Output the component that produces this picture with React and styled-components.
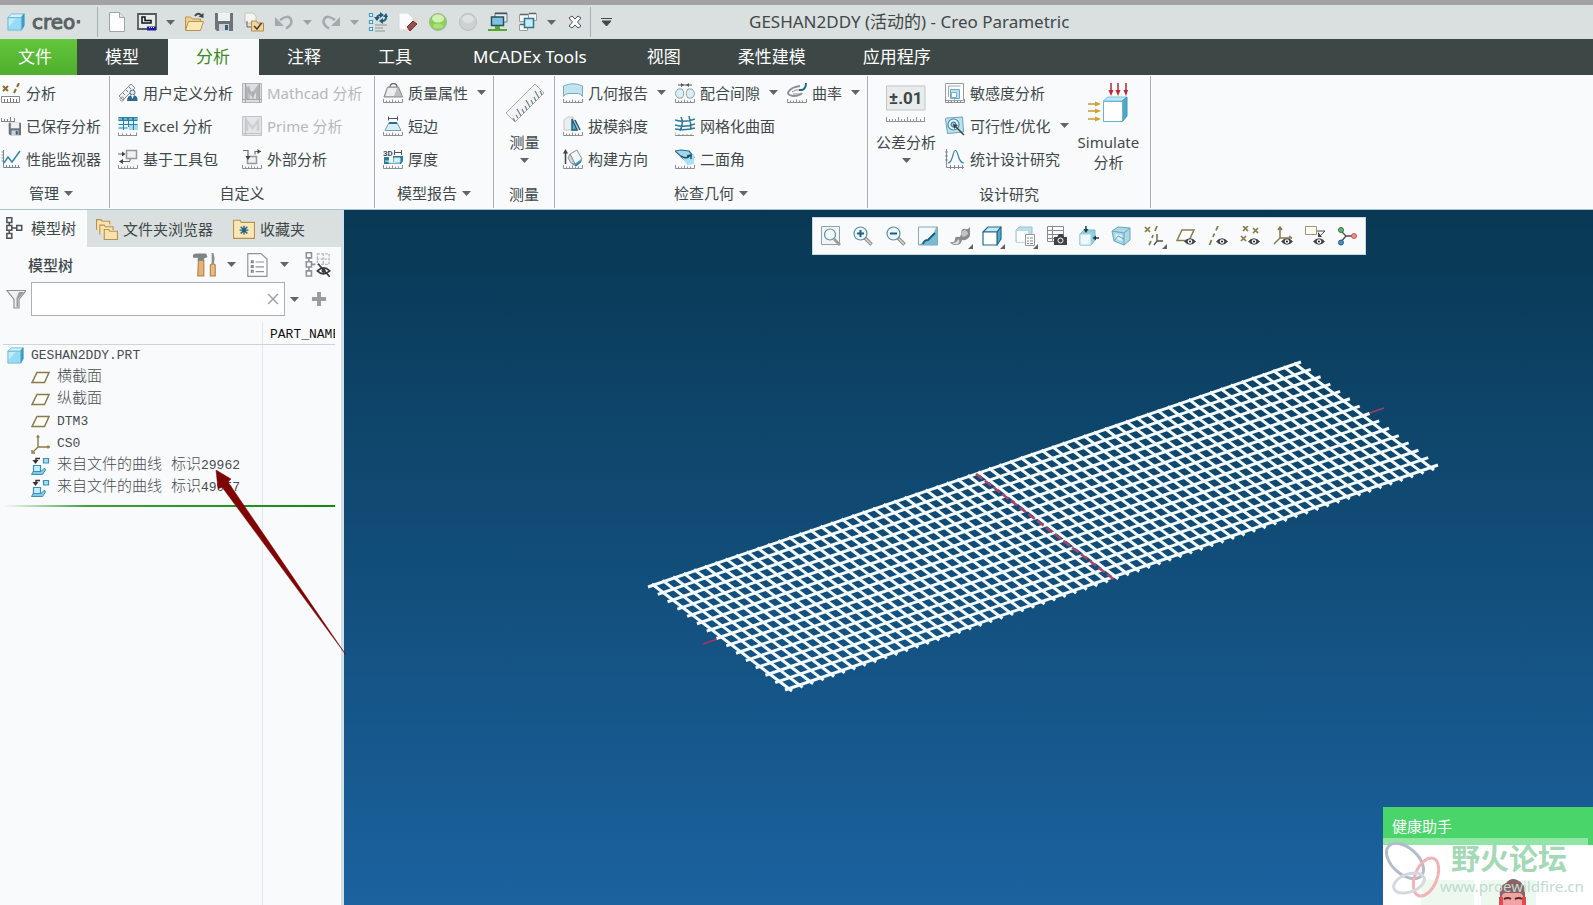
import React from "react";
import styled, { createGlobalStyle } from "styled-components";

const GlobalStyle = createGlobalStyle`
    * {
        box-sizing: border-box;
    }
    body {
        margin: 0;
        font-family: "Noto Sans", "Noto Sans CJK SC", sans-serif;
        font-size: 15px;
        line-height: 20px;
        color: #40484a;
    }
    button {
        padding: 0;
        border: 0;
        background: none;
        font: inherit;
        color: inherit;
        white-space: nowrap;
        cursor: pointer;
    }
    svg {
        display: block;
        flex: none;
    }
`;

const Page = styled.div`
    display: flex;
    flex-direction: column;
    min-height: 100vh;
    border-top: 5px solid #a2a1a3;
    background: #f8fafb;
    overflow: hidden;
`;

/* title bar */

const TitleBar = styled.header`
    display: flex;
    align-items: center;
    height: 34px;
    padding-left: 7px;
    background: #dae0df;
`;

const Brand = styled.div`
    display: flex;
    align-items: center;
    gap: 7px;
    width: 91px;
    height: 30px;
    border-right: 1px solid #a9b0b1;
    font-family: "DejaVu Sans", sans-serif;
    font-size: 20px;
    -webkit-text-stroke: 1px #586265;
    color: #586265;
`;

const QuickAccess = styled.nav`
    display: flex;
    align-items: center;
    height: 30px;
    padding-left: 4px;
    border-right: 1px solid #a9b0b1;
`;

const QuickButton = styled.button`
    display: flex;
    align-items: center;
    justify-content: center;
    width: ${(p) => (p.$caret ? "17px" : "30px")};
    height: 28px;
    opacity: ${(p) => (p.disabled ? 0.5 : 1)};
`;

const WindowTitle = styled.h1`
    margin: 0 0 0 128px;
    font-size: 17px;
    font-weight: 400;
    line-height: 24px;
`;

/* ribbon */

const TabBar = styled.nav`
    display: flex;
    height: 36px;
    background: #3d4746;
`;

const Tab = styled.button`
    && {
        padding: ${(p) => (p.$wide ? "0 32px" : "0 29px 0 28px")};
        font-size: 17px;
        line-height: 24px;
        color: ${(p) => (p.$active ? "#3b8a1e" : "#ffffff")};
        background: ${(p) => (p.$active ? "#f8fafb" : "transparent")};
    }
`;

const FileTab = styled(Tab)`
    && {
        padding: 0 25px 0 18px;
        background: linear-gradient(#63c63c, #4fae2e);
    }
`;

const Ribbon = styled.section`
    display: flex;
    height: 135px;
    padding: 1px 0;
    border-bottom: 1px solid #a5c3d0;
    background: #f8fafb;
`;

const Group = styled.div`
    display: flex;
    flex-direction: column;
    min-width: ${(p) => p.$width}px;
    padding-left: ${(p) => (p.$flush ? "1px" : "8px")};
    border-right: 1px solid #a9aeb0;
`;

const GroupBody = styled.div`
    display: flex;
    gap: 9px;
    height: 103px;
`;

const GroupLabel = styled.div`
    display: flex;
    align-items: center;
    justify-content: center;
    gap: 5px;
    height: 30px;
    padding-right: 8px;
`;

const Column = styled.div`
    display: flex;
    flex-direction: column;
`;

const Command = styled.button`
    display: flex;
    align-items: center;
    gap: 5px;
    height: 33px;
    && {
        color: ${(p) => (p.disabled ? "#b4b9bb" : "#40484a")};
    }
`;

const CommandText = styled.span`
    margin-right: ${(p) => (p.$caret ? "4px" : "0")};
`;

const BigCommand = styled.button`
    display: flex;
    flex-direction: column;
    align-items: center;
    gap: 6px;
    min-width: 45px;
    height: 103px;
    && {
        padding-top: 7px;
    }
`;

const BigText = styled.span`
    padding-top: 3px;
    white-space: pre-line;
`;

/* model tree */

const Workspace = styled.main`
    display: flex;
    flex: 1;
`;

const Sidebar = styled.aside`
    position: relative;
    display: flex;
    flex-direction: column;
    flex: none;
    width: 344px;
    border-right: 3px solid #d3dfe6;
    background: #f8fafb;
`;

const PanelTabs = styled.div`
    display: flex;
    height: 37px;
    background: #dae0df;
`;

const PanelTab = styled.button`
    display: flex;
    align-items: center;
    gap: ${(p) => (p.$active ? "6px" : "5px")};
    && {
        padding: 0 ${(p) => (p.$active ? "11px 2px 3px" : "11px 0 9px")};
        background: ${(p) => (p.$active ? "#f8fafb" : "transparent")};
    }
`;

const PanelHead = styled.div`
    display: flex;
    align-items: center;
    height: 35px;
    padding: 0 10px 0 28px;
`;

const PanelTitle = styled.h2`
    flex: 1;
    margin: 0;
    font-size: 15px;
    font-weight: 500;
`;

const PanelTools = styled.div`
    display: flex;
    align-items: center;
    gap: 10px;
`;

const HideButton = styled.button`
    margin-left: 6px;
`;

const SearchRow = styled.div`
    display: flex;
    align-items: center;
    gap: 5px;
    padding: 0 8px 0 6px;
`;

const SearchBox = styled.div`
    display: flex;
    align-items: center;
    flex: 1;
    height: 34px;
    padding-right: 4px;
    border: 1px solid #a9b0b3;
    background: #ffffff;
`;

const SearchInput = styled.input`
    flex: 1;
    min-width: 0;
    height: 30px;
    padding: 0 6px;
    border: 0;
    outline: 0;
    background: transparent;
    font: inherit;
`;

const TreeArea = styled.div`
    flex: 1;
    width: 332px;
    margin: 6px 0 0 3px;
    overflow: hidden;
    background: linear-gradient(#e1e6e9, #e1e6e9) 259px 0 / 1px 100% no-repeat;
`;

const TreeTable = styled.table`
    width: 332px;
    table-layout: fixed;
    border-collapse: collapse;
    font-family: "Liberation Mono", "Noto Sans CJK SC", monospace;
    font-size: 15px;
    font-weight: 300;
    color: #464c4f;
`;

const HeadCell = styled.th`
    width: ${(p) => p.$width};
    height: 22px;
    padding: 4px 0 0 7px;
    border-bottom: 1px solid #cfd4d6;
    font-size: 13px;
    font-weight: 400;
    line-height: 16px;
    text-align: left;
    white-space: nowrap;
    color: #111111;
`;

const TreeCell = styled.td`
    height: 22px;
    padding: 0;
`;

const TreeItem = styled.div`
    display: flex;
    align-items: center;
    gap: ${(p) => (p.$root ? "7px" : "6px")};
    height: 22px;
    padding-left: ${(p) => (p.$root ? "4px" : "28px")};
    white-space: pre;
`;

const Latin = styled.span`
    font-size: 13px;
`;

const InsertLine = styled.div`
    height: 2px;
    margin-top: 6px;
    background: linear-gradient(90deg, #f8fafb, #3fa13f 25%, #128a12);
`;

const Pointer = styled.svg`
    position: absolute;
    left: 215px;
    top: 260px;
    z-index: 2;
`;

/* graphics area */

const Viewport = styled.section`
    position: relative;
    flex: 1;
    overflow: hidden;
    background: linear-gradient(#083853, #1b629f);
`;

const Scene = styled.svg`
    position: absolute;
    left: 0;
    top: 0;
`;

const ViewTools = styled.div`
    position: absolute;
    left: 468px;
    top: 7px;
    display: flex;
    align-items: center;
    justify-content: space-between;
    width: 554px;
    height: 38px;
    padding: 0 8px;
    border: 1px solid #c9d6de;
    background: #f8fafb;
`;

const ViewTool = styled.button`
    position: relative;
    width: 20px;
    height: 20px;
`;

const Corner = styled.span`
    position: absolute;
    right: -3px;
    bottom: -3px;
    border-left: 5px solid transparent;
    border-bottom: 5px solid #5c6365;
`;

const Popup = styled.div`
    position: absolute;
    right: 0;
    bottom: 0;
    width: 210px;
    height: 98px;
    background: #ffffff;
    overflow: hidden;
`;

const PopupHead = styled.div`
    height: 38px;
    padding: 9px;
    background: #4ad56a;
    color: #ffffff;
`;

const WatermarkBand = styled.div`
    position: absolute;
    left: 0;
    top: 31px;
    width: 205px;
    height: 7px;
    background: rgba(255, 255, 255, 0.4);
`;

const PopupArt = styled.svg`
    position: absolute;
    left: 0;
    top: 31px;
`;

const Watermark = styled.div`
    position: absolute;
    left: 68px;
    top: 36px;
    color: #a5d9b6;
    font-size: 29px;
    font-weight: 700;
    line-height: 32px;
    white-space: nowrap;
`;

const WatermarkUrl = styled.div`
    position: absolute;
    left: 57px;
    top: 69px;
    color: #bcdcd0;
    line-height: 20px;
`;

/* icons */

const Caret = ({ color = "#5f6668" }) => (
    <svg width="9" height="5" viewBox="0 0 9 5">
        <path d="M0 0h9L4.500 5z" fill={color} />
    </svg>
);

const Ruler = () => (
    <path d="M.5 16v3.500h19V16M3.500 17.500v2M6.500 17.500v2M9.500 16.500v3M12.500 17.500v2M15.500 17.500v2" stroke="#8b8f91" fill="none" />
);

const Floppy = ({ x = 0, y = 0, s = 1 }) => (
    <g transform={`translate(${x} ${y}) scale(${s})`}>
        <path d="M1 1h18v18H3l-2-2z" fill="#6d7376" />
        <path d="M4 1h12v8H4z" fill="#eef1f2" />
        <path d="M5 12h10v7H5z" fill="#c9d4da" />
        <path d="M11 13h3v5h-3z" fill="#3c5d70" />
    </g>
);

const Cube = () => (
    <g strokeLinejoin="round">
        <path d="M1 5l4-4h14l-3 4z" fill="#d3f2fc" stroke="#69b9d6" />
        <path d="M16 5l3-4v13l-3 5z" fill="#3f9fc6" stroke="#3b93b8" />
        <path d="M1 5h15v14H1z" fill="#96dcf5" stroke="#69b9d6" />
        <path d="M2 6h8L2 15z" fill="#c2ecfa" />
    </g>
);

const Magnifier = () => (
    <g>
        <path d="M12 12l6.500 6.500" stroke="#8b8780" strokeWidth="3.500" />
        <path d="M12.500 12.500l5.500 5.500" stroke="#dedbd5" strokeWidth="1.500" />
        <circle cx="7.500" cy="7.500" r="6.500" fill="#eef8fc" stroke="#5d8fa3" strokeWidth="1.200" />
    </g>
);

const Eye = () => (
    <g>
        <path d="M8 15.500q6-6.500 12 0q-6 6.500-12 0z" fill="#3f4547" />
        <circle cx="14" cy="15.500" r="2.200" fill="#fff" />
        <circle cx="14" cy="15.500" r="1" fill="#222" />
    </g>
);

const Folder = () => (
    <g stroke="#b8924f">
        <path d="M1.500 18V5h5l2 2h8v4" fill="#f0cf8c" />
        <path d="M1.500 18.500l3-9h15l-3 9z" fill="#fbe7b4" />
    </g>
);

const icons = {
    part: <Cube />,
    newDoc: (
        <g>
            <path d="M2.500.5h10l5 5v14h-15z" fill="#fdfdfd" stroke="#a0a6a8" />
            <path d="M12.500.5v5h5" fill="#dfe3e4" stroke="#a0a6a8" />
        </g>
    ),
    sketch: (
        <g fill="none">
            <path d="M1 2h18v15H1z" fill="#e8ebeb" stroke="#555c5f" strokeWidth="1.800" />
            <path d="M5 5v6h9V8.500H8V5z" stroke="#111" strokeWidth="1.500" />
            <path d="M10 16.500h9" stroke="#1c1c96" strokeWidth="4" />
            <path d="M12 15.500h5" stroke="#d7dbff" strokeDasharray="1 1" />
        </g>
    ),
    open: (
        <g>
            <Folder />
            <path d="M11 4q3-4 6-1" fill="none" stroke="#3f4648" strokeWidth="2" />
            <path d="M14.500 4.500l5-3.500v5z" fill="#3f4648" />
        </g>
    ),
    save: <Floppy />,
    check: (
        <g>
            <path d="M1 1h8l3 3v7H1z" fill="#f4f4f2" stroke="#c5c2ba" />
            <path d="M3 9v6h4" fill="none" stroke="#666" />
            <path d="M7.500 9h5l1 2h6v8h-12z" fill="#f3d596" stroke="#b28b4b" />
            <path d="M10 14l3 3 4.500-6" fill="none" stroke="#3b4043" strokeWidth="1.500" />
        </g>
    ),
    undo: (
        <g>
            <path d="M6 8q8-6 11-.5q2 5-5 9" fill="none" stroke="#6f7678" strokeWidth="2.500" />
            <path d="M1 5v9h9z" fill="#6f7678" />
        </g>
    ),
    redo: (
        <g>
            <path d="M14 8q-8-6-11-.5q-2 5 5 9" fill="none" stroke="#6f7678" strokeWidth="2.500" />
            <path d="M19 5v9h-9z" fill="#6f7678" />
        </g>
    ),
    regen: (
        <g fill="none">
            <path d="M1.500 1.500h3v3h-3zM1.500 8.500h3v3h-3zM1.500 15.500h3v3h-3z" fill="#fff" stroke="#3a9dc4" strokeWidth="1.200" />
            <path d="M7 13h12M7 16h8M7 19h10" stroke="#8d9395" strokeWidth="1.200" />
            <path d="M9 8q-1-5 4-5M18 3q1 6-4 6" stroke="#1e5c78" strokeWidth="2" />
            <path d="M12 0l4 3-4 3zM15 6l-4 3 4 3zM6 5h6l-3 4zM15 5h5l-2-4z" fill="#1e5c78" />
        </g>
    ),
    erase: (
        <g>
            <path d="M1 1h9l5 5v12H1z" fill="#fbfbfb" stroke="#d4d8d9" />
            <path d="M9 15l6-6 4 3-7 7z" fill="#9a4d4d" stroke="#6e3434" />
            <path d="M15 8l3-3 2 3-1 3z" fill="#ded7cf" />
        </g>
    ),
    green: (
        <g>
            <circle cx="10" cy="10" r="8.500" fill="#8ccf5a" stroke="#a3b59c" />
            <ellipse cx="10" cy="6.500" rx="6" ry="4" fill="#d2f2b4" />
            <ellipse cx="10" cy="14" rx="5" ry="2.500" fill="#a8e07a" />
        </g>
    ),
    gray: (
        <g>
            <circle cx="10" cy="10" r="8.500" fill="#bfc5c5" stroke="#9a9f9f" />
            <ellipse cx="10" cy="7" rx="5.500" ry="4" fill="#e3e6e6" />
        </g>
    ),
    display: (
        <g>
            <path d="M7 1h12v9H7z" fill="#e8f0f3" stroke="#637a85" />
            <path d="M7 1.500h12" stroke="#3f5560" strokeWidth="1.500" />
            <path d="M3.500 5h12v8.500h-12z" fill="#7cc3e3" stroke="#2e4c5c" strokeWidth="1.500" />
            <path d="M7 14h5v3h7v2H0v-2h7z" fill="#54a832" />
        </g>
    ),
    windows: (
        <g fill="#f5f7f7" stroke="#9aa1a4">
            <path d="M1.500 2.500h9v7h-9zM10.500 1.500h8v7h-8zM1.500 12.500h8v6h-8z" />
            <path d="M2 2.500h8M11 1.500h7M2 12.500h7" stroke="#5f6668" strokeWidth="1.500" />
            <path d="M6.500 6.500h9v9h-9z" fill="#c9ebf8" stroke="#2f7695" strokeWidth="1.500" />
        </g>
    ),
    close: <path d="M4 6l3-2 3 3 3-3 3 2-3.500 4 3.500 4-3 2-3-3-3 3-3-2 3.500-4z" fill="#fff" stroke="#4a5154" />,

    analysis: (
        <g>
            <path d="M2 3l5 5M7 3L2 8" stroke="#8a6f2c" strokeWidth="2" />
            <path d="M18 0l-2 4M15 6l-2 4" stroke="#8a6f2c" strokeWidth="2" />
            <path d="M.5 13.500h18v6H.5z" fill="#fff" stroke="#888" />
            <path d="M3.500 16v3M6.500 16v3M9.500 15v4M12.500 16v3M15.500 16v3" stroke="#777" />
        </g>
    ),
    saved: (
        <g>
            <path d="M0 5.500h14M.5 2v4M3.500 3v3M6.500 3v3M9.500 1v5M13.500 2v4" stroke="#7d8284" />
            <Floppy x={7} y={6} s={0.7} />
        </g>
    ),
    perf: (
        <g fill="none">
            <path d="M2.500 1v17.500H19M.5 3h2M.5 6h2M.5 9h2M.5 12h2M5.500 16v2M8.500 16v2M11.500 16v2M14.500 16v2M17.500 16v2" stroke="#6f8a96" />
            <path d="M3 14l4-6 4 5 8-11" stroke="#3585aa" strokeWidth="1.500" />
        </g>
    ),
    uda: (
        <g>
            <path d="M1 13L13 1l4 4L5 17z" fill="#f1f2f2" stroke="#8b8f91" />
            <path d="M5 10l2 2M8 7l2 2M11 4l2 2" stroke="#777" />
            <circle cx="4" cy="16" r="2" fill="none" stroke="#999" />
            <circle cx="14.500" cy="9.500" r="2.500" fill="#d9ecf5" stroke="#476374" />
            <path d="M9 18q0-6 5.500-6t5 6z" fill="#2e6a90" />
            <path d="M13 12h3l-1.500 4z" fill="#fff" />
        </g>
    ),
    excel: (
        <g>
            <path d="M.5 1h19v13H.5z" fill="#e7f5fa" />
            <path d="M.5 1h19v4H.5z" fill="#2483a8" />
            <path d="M5.500 1v13M10.500 1v10M15.500 1v13M.5 8.500h19M.5 12h9" stroke="#2483a8" />
            <path d="M11 9h4v5h-4zM16 9h4v5h-4z" fill="#a7d8ea" />
            <path d="M1 3h18" stroke="#bfe2ee" strokeDasharray="3 2" />
            <path d="M0 19.500h19M.5 16.500v3M4.500 17.500v2M8.500 17.500v2M12.500 17.500v2M18.500 16.500v3" stroke="#8b8f91" />
        </g>
    ),
    toolkit: (
        <g fill="none" stroke="#5d6365">
            <path d="M8.500 1.500h10v8h-10z" fill="#eff1f2" stroke="#999" strokeWidth="1.500" />
            <path d="M0 5h6M3 12.500h9M12 12v-2" />
            <path d="M4 2.500L7.500 5 4 7.500zM5 10l-4 2.500L5 15z" fill="#444" stroke="none" />
            <Ruler />
        </g>
    ),
    mathcad: (
        <g>
            <path d="M.5.5h19v19H.5z" fill="#dcdfe0" stroke="#b1b5b7" />
            <path d="M4.500 16V5l6 7 5-7v11" fill="none" stroke="#b1b5b7" strokeWidth="3" />
            <path d="M3.500 0v20M0 16.500h20M7 3v14M17.500 0v20M11 8v9" stroke="#a2a7a9" />
        </g>
    ),
    prime: (
        <g>
            <path d="M.5.5h19v19H.5z" fill="#e3e6e7" stroke="#c0c4c6" />
            <path d="M5 15V5l5.500 7L16 5v10" fill="none" stroke="#cbcfd1" strokeWidth="2.500" />
            <path d="M3.500 0v20M0 17.500h20" stroke="#bfc4c6" />
        </g>
    ),
    external: (
        <g fill="none" stroke="#6b7072">
            <path d="M1 1.500h5v8M19 2.500h-6v3" strokeWidth="1.200" />
            <path d="M5.500 7.500h9v7h-9z" fill="#eff1f2" stroke="#999" strokeWidth="1.500" />
            <path d="M3.500 7L6 11l2.500-4zM15.500 0L19 2.500 15.500 5z" fill="#444" stroke="none" />
            <Ruler />
        </g>
    ),
    mass: (
        <g>
            <path d="M7 4q0-3.500 3.500-3.500T14 4" fill="none" stroke="#6a7072" strokeWidth="1.500" />
            <path d="M4.500 4h11l4 10H1z" fill="#b9bfc2" stroke="#878d90" />
            <path d="M5 5h9l-3 8H2.500z" fill="#eceeef" />
            <Ruler />
        </g>
    ),
    shortEdge: (
        <g>
            <path d="M5 2.500h10M5.500.5v4M14.500.5v4" stroke="#4f5557" />
            <path d="M6 6.500h8l4 8H2z" fill="#d5eef7" stroke="#7d9daa" />
            <path d="M6 7h8" stroke="#256f90" strokeWidth="2" />
            <Ruler />
        </g>
    ),
    thickness: (
        <g>
            <text x="0" y="6.500" fontSize="8" fontWeight="700" fill="#4a5052" fontFamily="Roboto, sans-serif">3D</text>
            <path d="M11 3.500h8M11.500 1v5M18.500 1v5" stroke="#4f5557" />
            <path d="M1 8h5v5h4V7h10v5l-2 3H1z" fill="#2d7d98" />
            <path d="M11 9h6v4h-6zM2 12h4v2h11" fill="#def2f8" stroke="#bfe6f2" />
            <Ruler />
        </g>
    ),
    geometry: (
        <g>
            <path d="M.5 3q9-4.500 19 0v10.500q-2-3-4-3H5q-3 0-4.500 3z" fill="#bfe4f2" stroke="#7fa9b9" />
            <Ruler />
        </g>
    ),
    draft: (
        <g>
            <path d="M1 4l4-3h5l5 13H1z" fill="#eceeef" stroke="#c4c8ca" />
            <path d="M9 3l5 11H9z" fill="#52b4d6" stroke="#245d78" strokeWidth="1.500" />
            <path d="M12 4l5 10" stroke="#245d78" strokeWidth="1.500" />
            <Ruler />
        </g>
    ),
    orientation: (
        <g>
            <path d="M2.500 15V3" stroke="#3f4547" strokeWidth="1.500" />
            <path d="M0 4.500L2.500 0 5 4.500z" fill="#3f4547" />
            <path d="M7 5l7-4 5 9-7 5z" fill="#f3f5f6" stroke="#8c9396" />
            <path d="M7 5l5 10-4-1-3-5z" fill="#c9dde5" stroke="#8c9396" />
            <path d="M12 15.500l7-5-1 3-5 4-5-3z" fill="#2884a8" />
            <Ruler />
        </g>
    ),
    clearance: (
        <g>
            <path d="M3 2h14" stroke="#4f5557" />
            <path d="M6 0l3 2-3 2zM14 0l-3 2 3 2z" fill="#4f5557" />
            <path d="M3 6h4q3.500 4.500 0 9H3q-5-4.500 0-9zM13 6h4q5 4.500 0 9h-4q-3.500-4.500 0-9z" fill="#dceff6" stroke="#8ba3ad" />
            <Ruler />
        </g>
    ),
    meshSurf: (
        <g fill="none" stroke="#2d7797" strokeWidth="1.500">
            <path d="M0 4q10 3 20-1M0 9q10 3 20-1M0 13q10 2 20-1M6 1q3 6-1 14M14 0q2 7 2 14" />
            <path d="M0 16.500v3h19M4 18v2M8 18v2M12 18v2M16 18v2" stroke="#8b8f91" strokeWidth="1" />
        </g>
    ),
    dihedral: (
        <g>
            <path d="M0 2l6-1 8 1 5 6-8 4z" fill="#9fd6ea" stroke="#2a6f8e" strokeWidth="1.200" />
            <path d="M7 8l12-3v10l-7 1z" fill="#a9dff2" />
            <path d="M6 7q6 4 9-1M12 7l4-1v4" fill="none" stroke="#134f6d" strokeWidth="1.500" />
            <Ruler />
        </g>
    ),
    curvature: (
        <g fill="none">
            <path d="M13 3q-8 1-11 5t4 5q7 0 9-3" stroke="#8b9194" strokeWidth="2" />
            <path d="M5 9q4-3 8-2M6 11h7" stroke="#8b9194" />
            <path d="M12 7h3q4-1 4-7" stroke="#256d84" strokeWidth="2" />
            <Ruler />
        </g>
    ),
    sensitivity: (
        <g>
            <path d="M.5.5h18v17H.5z" fill="#fff" stroke="#959b9e" />
            <path d="M3.500 14V3h12" fill="none" stroke="#94a9b2" />
            <path d="M5.500 6.500h9v9h-9z" fill="#b9e0ee" stroke="#6ba8c0" />
            <path d="M6.500 9.500h5v5h-5z" fill="#fff" stroke="#7db3c8" />
            <Ruler />
        </g>
    ),
    feasibility: (
        <g>
            <path d="M.5 3q1-2 3-1l14-1 1 15-16 1.500z" fill="#bde2ef" stroke="#6aa5bb" />
            <circle cx="8.500" cy="8.500" r="5.500" fill="#e4f5fa" stroke="#4f87a0" strokeWidth="1.200" />
            <circle cx="8.500" cy="8.500" r="2.500" fill="#8fcbe0" stroke="#2f6c88" />
            <path d="M10 10l9 9" stroke="#3d4345" strokeWidth="1.500" />
            <path d="M8 8l5 1-4 4z" fill="#3d4345" />
        </g>
    ),
    statistics: (
        <g fill="none">
            <path d="M1.500 0v18.500H19M0 3h3M0 7h3M0 11h3M5.500 16v4M9.500 16v4M13.500 16v4M17.500 16v4" stroke="#85898b" />
            <path d="M3 14q3 0 5-8q2.500-9 5 0q2 8 6 8" stroke="#3787ab" strokeWidth="1.200" />
        </g>
    ),

    treeTab: <path d="M3.500.7h4.500v4.300H3.500zM3.500 7.800h4.500v4.300H3.500zM3.500 15h4.500v4.300H3.500zM12.500 7.800h4.500v4.300h-4.500zM5.700 5v2.800M5.700 12.100V15M8 10h4.500" fill="none" stroke="#4b5153" strokeWidth="1.400" />,
    folders: (
        <g stroke="#b8924f" fill="#f9e2ae">
            <path d="M.5 11V1.500h4l1 1.500h7v3" />
            <path d="M3.500 15V6.500h4l1 1.500h7v3" />
            <path d="M7.500 19.500v-9h4l1 1.500h7v7.500z" />
        </g>
    ),
    favorites: (
        <g>
            <path d="M.5 18.500V2h6l1 2h12v14.500z" fill="#fbe6b6" stroke="#b8924f" />
            <path d="M10 7v8M6 11h8M7 8l6 6M13 8l-6 6" stroke="#1f5f80" strokeWidth="1.300" />
        </g>
    ),
    tools: (
        <g>
            <path d="M4.500 6h4.500v13H4z" fill="#e3b377" stroke="#b5854a" />
            <path d="M0 1.500q2-1.500 5-1h6l1 3-3 1v2H4V4L0 4z" fill="#7d8486" />
            <path d="M15.500 0h1.500l1 4-.5 5h-2z" fill="#8a9092" />
            <path d="M14.500 10q2-2 4 0v9h-4z" fill="#e9bd84" stroke="#b5854a" />
        </g>
    ),
    list: (
        <g>
            <path d="M1.500.5h11l5 4.500v14.500h-16z" fill="#fdfdfd" stroke="#8e9496" />
            <path d="M8 7.500h7M8 11.500h7M8 15.500h7" stroke="#8e9496" />
            <path d="M4.500 6.500h1.500v1.500H4.500zM4.500 10.500h1.500v1.500H4.500zM4.500 14.500h1.500v1.500H4.500z" fill="none" stroke="#7d8486" />
        </g>
    ),
    treeHide: (
        <g fill="none">
            <path d="M1 .500h4v4H1zM1 7.500h4v4H1zM1 14.500h4v4H1zM3 4.500v3M3 11.500v3M5 9.500h3" stroke="#8b9194" strokeWidth="1.200" />
            <path d="M9.500 1.500h9v8h-9zM14 1v9M9 5.500h10" stroke="#b2b7b9" strokeDasharray="2 1" />
            <path d="M9.500 14.500q5-4.500 9.500 0q-5 4.500-9.500 0z" fill="#fff" stroke="#363b3d" strokeWidth="1.300" />
            <path d="M10 9l9 10" stroke="#363b3d" strokeWidth="1.300" />
            <circle cx="14.300" cy="14.500" r="1.600" fill="#363b3d" />
        </g>
    ),
    filter: (
        <g>
            <path d="M1 1.500h19l-7 9V19H8v-8.500z" fill="#eef0f1" stroke="#8b9294" strokeWidth="1.200" />
            <path d="M13 3h5l-6 7v8h-1.500V9z" fill="#979da0" />
        </g>
    ),
    clear: <path d="M3 3l14 14M17 3L3 17" stroke="#9aa0a3" strokeWidth="2" />,
    plus: <path d="M10 5.300v9.400M5.300 10h9.400" stroke="#989ea0" strokeWidth="2.600" />,
    plane: <path d="M1 14.500L6 4.500h12l-4.500 10z" fill="#fff" stroke="#8a7a48" strokeWidth="1.500" />,
    csys: (
        <g fill="none" stroke="#8a7a48" strokeWidth="1.400">
            <path d="M7 1v12h12M7 13l-5 5" />
            <path d="M5.500 3h3M17 11.500v3M1 16v3h3" />
        </g>
    ),
    curve: (
        <g>
            <path d="M12.500 2.500h5v4.500h-5z" fill="#a5def2" stroke="#3a91b5" strokeWidth="1.200" />
            <path d="M9 2.500H5V6" fill="none" stroke="#333" strokeWidth="1.500" />
            <path d="M1.500 4h6L4.500 8z" fill="#333" />
            <path d="M.5 18.500l2-3.500h8l3-3 1 2-3 4.500z" fill="#7fcbe8" stroke="#3a91b5" />
            <path d="M2.500 9.500h7v6h-7z" fill="#c9eefa" stroke="#3a91b5" strokeWidth="1.200" />
        </g>
    ),

    refit: (
        <g>
            <path d="M.5.5h18v18H.5z" fill="#f2f5f6" stroke="#92a0a6" />
            <path d="M13 13l6 6" stroke="#a19d96" strokeWidth="3" />
            <circle cx="9" cy="8.500" r="5.500" fill="#f1fafd" stroke="#5d8fa3" strokeWidth="1.200" />
        </g>
    ),
    zoomIn: (
        <g>
            <Magnifier />
            <path d="M7.500 4v7M4 7.500h7" stroke="#1d5f80" strokeWidth="2" />
        </g>
    ),
    zoomOut: (
        <g>
            <Magnifier />
            <path d="M4 7.500h7" stroke="#1d5f80" strokeWidth="2" />
        </g>
    ),
    repaint: (
        <g>
            <path d="M.5 1h19v18H.5z" fill="#78bcd4" stroke="#86a8b5" />
            <path d="M1 1.500h17q-3 11-17 17z" fill="#f4fafc" />
            <path d="M5 18q1-4 5-4l7-7" stroke="#1d5f80" strokeWidth="2" fill="none" />
        </g>
    ),
    render: (
        <g>
            <path d="M0 16q5 1 5-3 0-3 4-2 2 0 2-4 1-5 4-4 3 1 5-2v9q-3 5-8 4-1 5-6 5-5 0-6-3z" fill="#8a8a8a" />
            <path d="M11 8q1-4 4-4 3 1 3 4-2 3-5 3z" fill="#c4c4c4" />
            <path d="M2 17q5 0 6-4 3 2 0 5-3 1-6-1z" fill="#dcdcdc" />
        </g>
    ),
    shaded: (
        <g stroke="#256d8e" strokeWidth="1.200" strokeLinejoin="round">
            <path d="M1 6l5-5h13l-4 5z" fill="#c1e8f4" />
            <path d="M15 6l4-5v12l-4 6z" fill="#55aac9" />
            <path d="M1 6h14v13H1z" fill="#fff" />
        </g>
    ),
    saveView: (
        <g>
            <path d="M1 4l3-3h13v15H1z" fill="#b5dfec" stroke="#9cc6d5" />
            <path d="M1.500 4.500h12v12h-12z" fill="#fbfdfe" stroke="#c1d6de" />
            <path d="M10.500 8.500h9v11h-9z" fill="#fff" stroke="#8f9799" />
            <path d="M12 12h2M15 12h3M12 15h2M15 15h3M12 17.500h2M15 17.500h3" stroke="#7f8789" />
        </g>
    ),
    viewMgr: (
        <g>
            <path d="M.5.5h16v15H.5zM.5 4.500h16M.5 8.500h16M.5 12.500h9M5.500.5v15" fill="#fafafa" stroke="#858b8e" />
            <path d="M7 11h3l2-3h4l1 3h3v8H7z" fill="#3e4446" />
            <circle cx="13.500" cy="14.500" r="2.500" fill="#3e4446" stroke="#fff" />
        </g>
    ),
    standard: (
        <g>
            <path d="M1 8l4-4h11v10l-4 5H1z" fill="#8fcfe5" stroke="#7fb5c8" />
            <path d="M1 8h11v11H1z" fill="#eff9fc" stroke="#a5cedc" />
            <path d="M7 0v6M20 12h-5" stroke="#1c3d4d" strokeWidth="1.500" />
            <path d="M4.500 3h5L7 7zM17 9.500v5L13.500 12z" fill="#1c3d4d" />
        </g>
    ),
    persp: (
        <g stroke="#6aa5b9">
            <path d="M1 5l6-4 12 1v12l-6 5-10-4z" fill="#a9d9e8" />
            <path d="M4 8l7 1v6l-6-2z" fill="#d9f0f7" stroke="none" />
            <path d="M1 5l12 2 6-5M13 7v12M3 15l4-5 6 3" fill="none" />
        </g>
    ),
    datumAll: (
        <g fill="none" stroke="#8a7a48" strokeWidth="1.700">
            <path d="M1 1l5 5M6 1L1 6" />
            <path d="M13 0l-2 5M9 9l-1 3M7 15l-2 4" />
            <path d="M13 8v7h6M13 15l-3 4" stroke="#5b5340" strokeWidth="1.300" />
        </g>
    ),
    planeEye: (
        <g>
            <path d="M1 14.500L6 4h12l-5 10.500z" fill="#fff" stroke="#8a7a48" strokeWidth="1.500" />
            <Eye />
        </g>
    ),
    axisEye: (
        <g>
            <path d="M10 0L8 4.500M6.500 7.500L5 11M3.500 14L1.500 19" stroke="#8a7a48" strokeWidth="1.800" />
            <Eye />
        </g>
    ),
    pointEye: (
        <g>
            <path d="M3 0l5 5M8 0L3 5M13 2l5 5M18 2l-5 5M1 10l5 5M6 10l-5 5" stroke="#8a7a48" strokeWidth="1.700" />
            <Eye />
        </g>
    ),
    csysEye: (
        <g>
            <path d="M7 1v11h12M7 12l-6 6M5 4l2-3 2 3M16 10l3 2" fill="none" stroke="#8a7a48" strokeWidth="1.500" />
            <Eye />
        </g>
    ),
    noteEye: (
        <g>
            <path d="M.5.5h11v8H.5z" fill="#fffdf4" stroke="#9c9473" />
            <path d="M12 5h8l-5 5" fill="none" stroke="#444" />
            <path d="M13 6v5h4z" fill="#444" />
            <Eye />
        </g>
    ),
    spin: (
        <g>
            <path d="M3 4l6 6-6 7M9 10h9" fill="none" stroke="#444b4e" strokeWidth="1.300" />
            <circle cx="4" cy="4" r="2.500" fill="#63b56f" stroke="#36744a" />
            <circle cx="17" cy="10" r="2.500" fill="#ef8d8d" stroke="#c55858" />
            <circle cx="4" cy="16.500" r="2.500" fill="#4d8fbd" stroke="#2a5c82" />
        </g>
    ),
};

const Icon = ({ name, size = 20 }) => (
    <svg width={size} height={size} viewBox="0 0 20 20" aria-hidden="true">
        {icons[name]}
    </svg>
);

const MeasureIcon = () => (
    <svg width="40" height="40" viewBox="0 0 40 40" aria-hidden="true">
        <path d="M1 30L30 1l9 9L10 39z" fill="#f3f4f4" stroke="#a9aeb0" />
        <path d="M10 38l-2-3M13 35l-2-3M16 33l-4-7M19 30l-2-4M22 27l-2-4M25 24l-4-7M28 21l-2-4M31 18l-2-4M34 15l-4-7M37 12l-2-4" stroke="#64808c" strokeWidth="1.200" />
    </svg>
);

const ToleranceIcon = () => (
    <svg width="40" height="40" viewBox="0 0 40 40" aria-hidden="true">
        <path d="M.5 3h38.500v24H.5z" fill="#e9ecec" stroke="#c0c5c6" />
        <text x="3" y="21" fontSize="17" fontWeight="700" fill="#3f4446" fontFamily="Roboto, sans-serif">±.01</text>
        <path d="M0 38.500h39M.5 34v4M3.500 36v2M6.500 36v2M9.500 36v2M12.500 34v4M15.500 36v2M18.500 36v2M21.500 34v4M24.500 36v2M27.500 36v2M30.500 34v4M34.500 36v2M38.500 34v4" stroke="#8d9294" />
    </svg>
);

const SimulateIcon = () => (
    <svg width="40" height="40" viewBox="0 0 40 40" aria-hidden="true">
        <path d="M15 18l5-4h19l-4 4z" fill="#bfe8f6" stroke="#7fc3dc" />
        <path d="M34 18l5-4v19l-5 6z" fill="#4da7c9" stroke="#3f97ba" />
        <path d="M15.500 18.500h19v20h-19z" fill="#fff" stroke="#69b4d0" />
        <path d="M23 0v9M30 0v9M38 0v9" stroke="#b02a3a" strokeWidth="1.500" />
        <path d="M20.500 7h5L23 13zM27.500 7h5L30 13zM35.500 7h4.500L38 13z" fill="#c02636" />
        <path d="M0 21h9M0 28h9M0 36h9" stroke="#c69a34" strokeWidth="1.500" />
        <path d="M7 18.500v5l6-2.500zM7 25.500v5l6-2.500zM7 33.500v5l6-2.500z" fill="#d3a02c" />
    </svg>
);

const quickTools = [
    { icon: "newDoc", label: "新建" },
    { icon: "sketch", label: "窗口" },
    { caret: true, label: "窗口列表" },
    { icon: "open", label: "打开" },
    { icon: "save", label: "保存" },
    { icon: "check", label: "检查" },
    { icon: "undo", label: "撤消", disabled: true },
    { caret: true, label: "撤消列表", disabled: true },
    { icon: "redo", label: "重做", disabled: true },
    { caret: true, label: "重做列表", disabled: true },
    { icon: "regen", label: "重新生成" },
    { icon: "erase", label: "拭除" },
    { icon: "green", label: "开始" },
    { icon: "gray", label: "停止", disabled: true },
    { icon: "display", label: "显示" },
    { icon: "windows", label: "切换窗口" },
    { caret: true, label: "切换窗口列表" },
    { icon: "close", label: "关闭" },
];

const tabs = ["模型", "分析", "注释", "工具", "MCADEx Tools", "视图", "柔性建模", "应用程序"];

const viewTools = [
    ["refit", "重新调整"],
    ["zoomIn", "放大"],
    ["zoomOut", "缩小"],
    ["repaint", "重画"],
    ["render", "渲染选项", true],
    ["shaded", "显示样式", true],
    ["saveView", "已保存方向", true],
    ["viewMgr", "视图管理器"],
    ["standard", "视图法向"],
    ["persp", "透视图"],
    ["datumAll", "基准显示过滤器", true],
    ["planeEye", "平面显示"],
    ["axisEye", "轴显示"],
    ["pointEye", "点显示"],
    ["csysEye", "坐标系显示"],
    ["noteEye", "注释显示"],
    ["spin", "旋转中心"],
];

const treeRows = [
    { icon: "plane", name: "横截面" },
    { icon: "plane", name: "纵截面" },
    { icon: "plane", id: "DTM3" },
    { icon: "csys", id: "CS0" },
    { icon: "curve", name: "来自文件的曲线 标识", id: "29962" },
    { icon: "curve", name: "来自文件的曲线 标识", id: "49957" },
];

const Cmd = ({ icon, caret, disabled, children }) => (
    <Command disabled={disabled}>
        <Icon name={icon} />
        <CommandText $caret={caret}>{children}</CommandText>
        {caret && <Caret />}
    </Command>
);

const LONG_LINES = 15;
const SHORT_LINES = 62;

const Mesh = () => {
    const long = Array.from({ length: LONG_LINES }, (_, i) => {
        const x = 304 + (i * 137) / 14;
        const y = 377 + (i * 103) / 14;
        return `M${x} ${y}l653-225`;
    });
    const short = Array.from({ length: SHORT_LINES }, (_, i) => {
        const x = 308 + (i * 642) / 61;
        const y = 374 - (i * 221) / 61;
        return `M${x} ${y}l140 107`;
    });
    return (
        <Scene width="1249" height="695" viewBox="0 0 1249 695" aria-label="GESHAN2DDY">
            <path d="M359 434L1040 198" stroke="#a83a62" strokeWidth="1.500" />
            <g fill="none" stroke="#f5fcff" strokeWidth="3">
                <path d={long.join("")} />
                <path d={short.join("")} />
            </g>
            <path d="M632 264L772 371" stroke="#a8446a" strokeWidth="2.500" strokeDasharray="8 3" />
        </Scene>
    );
};

const RibbonGroups = () => (
    <Ribbon>
        <Group $width={110} $flush>
            <GroupBody>
                <Column>
                    <Cmd icon="analysis">分析</Cmd>
                    <Cmd icon="saved">已保存分析</Cmd>
                    <Cmd icon="perf">性能监视器</Cmd>
                </Column>
            </GroupBody>
            <GroupLabel>管理 <Caret /></GroupLabel>
        </Group>
        <Group $width={265}>
            <GroupBody>
                <Column>
                    <Cmd icon="uda">用户定义分析</Cmd>
                    <Cmd icon="excel">Excel 分析</Cmd>
                    <Cmd icon="toolkit">基于工具包</Cmd>
                </Column>
                <Column>
                    <Cmd icon="mathcad" disabled>Mathcad 分析</Cmd>
                    <Cmd icon="prime" disabled>Prime 分析</Cmd>
                    <Cmd icon="external">外部分析</Cmd>
                </Column>
            </GroupBody>
            <GroupLabel>自定义</GroupLabel>
        </Group>
        <Group $width={119}>
            <GroupBody>
                <Column>
                    <Cmd icon="mass" caret>质量属性</Cmd>
                    <Cmd icon="shortEdge">短边</Cmd>
                    <Cmd icon="thickness">厚度</Cmd>
                </Column>
            </GroupBody>
            <GroupLabel>模型报告 <Caret /></GroupLabel>
        </Group>
        <Group $width={61}>
            <GroupBody>
                <BigCommand>
                    <MeasureIcon />
                    <BigText>测量</BigText>
                    <Caret />
                </BigCommand>
            </GroupBody>
            <GroupLabel>测量</GroupLabel>
        </Group>
        <Group $width={313}>
            <GroupBody>
                <Column>
                    <Cmd icon="geometry" caret>几何报告</Cmd>
                    <Cmd icon="draft">拔模斜度</Cmd>
                    <Cmd icon="orientation">构建方向</Cmd>
                </Column>
                <Column>
                    <Cmd icon="clearance" caret>配合间隙</Cmd>
                    <Cmd icon="meshSurf">网格化曲面</Cmd>
                    <Cmd icon="dihedral">二面角</Cmd>
                </Column>
                <Column>
                    <Cmd icon="curvature" caret>曲率</Cmd>
                </Column>
            </GroupBody>
            <GroupLabel>检查几何 <Caret /></GroupLabel>
        </Group>
        <Group $width={283}>
            <GroupBody>
                <BigCommand>
                    <ToleranceIcon />
                    <BigText>公差分析</BigText>
                    <Caret />
                </BigCommand>
                <Column>
                    <Cmd icon="sensitivity">敏感度分析</Cmd>
                    <Cmd icon="feasibility" caret>可行性/优化</Cmd>
                    <Cmd icon="statistics">统计设计研究</Cmd>
                </Column>
                <BigCommand>
                    <SimulateIcon />
                    <BigText>{"Simulate\n分析"}</BigText>
                </BigCommand>
            </GroupBody>
            <GroupLabel>设计研究</GroupLabel>
        </Group>
    </Ribbon>
);

const ModelTree = () => (
    <Sidebar>
        <PanelTabs>
            <PanelTab $active><Icon name="treeTab" size={22} />模型树</PanelTab>
            <PanelTab><Icon name="folders" size={22} />文件夹浏览器</PanelTab>
            <PanelTab><Icon name="favorites" size={22} />收藏夹</PanelTab>
        </PanelTabs>
        <PanelHead>
            <PanelTitle>模型树</PanelTitle>
            <PanelTools>
                <button aria-label="设置"><Icon name="tools" size={24} /></button>
                <Caret />
                <button aria-label="显示"><Icon name="list" size={24} /></button>
                <Caret />
                <HideButton aria-label="隐藏树"><Icon name="treeHide" size={26} /></HideButton>
            </PanelTools>
        </PanelHead>
        <SearchRow>
            <Icon name="filter" />
            <SearchBox>
                <SearchInput type="text" aria-label="搜索模型树" />
                <button aria-label="清除"><Icon name="clear" size={14} /></button>
            </SearchBox>
            <Caret />
            <button aria-label="添加"><Icon name="plus" size={30} /></button>
        </SearchRow>
        <TreeArea>
            <TreeTable>
                <thead>
                    <tr>
                        <HeadCell $width="260px" aria-label="模型" />
                        <HeadCell $width="auto">PART_NAME</HeadCell>
                    </tr>
                </thead>
                <tbody>
                    <tr>
                        <TreeCell>
                            <TreeItem $root><Icon name="part" size={17} /><Latin>GESHAN2DDY.PRT</Latin></TreeItem>
                        </TreeCell>
                        <TreeCell />
                    </tr>
                    {treeRows.map((row, i) => (
                        <tr key={i}>
                            <TreeCell>
                                <TreeItem>
                                    <Icon name={row.icon} />
                                    <span>
                                        {row.name}
                                        {row.id && <Latin>{row.id}</Latin>}
                                    </span>
                                </TreeItem>
                            </TreeCell>
                            <TreeCell />
                        </tr>
                    ))}
                </tbody>
            </TreeTable>
            <InsertLine />
        </TreeArea>
        <Pointer width="132" height="186" viewBox="0 0 132 186">
            <path d="M1 0l15 9-3 3L131 185 7 17l-4 2z" fill="#7f0505" stroke="#7f0505" strokeWidth=".5" />
        </Pointer>
    </Sidebar>
);

const HealthPopup = () => (
    <Popup>
        <PopupHead>健康助手</PopupHead>
        <WatermarkBand />
        <PopupArt width="210" height="67" viewBox="0 0 210 67">
            <path d="M38 42h53v25H38zM98 42h55v25H98z" fill="#edf8ee" />
            <g fill="none" strokeWidth="3">
                <ellipse cx="22" cy="23" rx="13" ry="22" transform="rotate(-48 22 23)" stroke="#b3bcc9" />
                <ellipse cx="43" cy="39" rx="11" ry="20" transform="rotate(22 43 39)" stroke="#efb3b8" />
                <ellipse cx="26" cy="45" rx="16" ry="9" transform="rotate(-20 26 45)" stroke="#d5d8e0" />
            </g>
            <path d="M117 67v-9q-2-10 6-13 5-6 11-3 9 3 8 16v9z" fill="#8b6266" />
            <path d="M119 67q-2-12 3-12h14q6 0 4 12z" fill="#f3a3a3" />
            <path d="M116 59h4v8h-4zM139 59h4v8h-4z" fill="#e04a50" />
            <path d="M121 61q4-2 7 0M132 61q4-2 7 0" stroke="#5a2a2c" strokeWidth="2" fill="none" />
        </PopupArt>
        <Watermark>野火论坛</Watermark>
        <WatermarkUrl>www.proewildfire.cn</WatermarkUrl>
    </Popup>
);

const App = () => {
    return (
        <Page>
            <GlobalStyle />
            <TitleBar>
                <Brand><Icon name="part" size={18} />creo·</Brand>
                <QuickAccess>
                    {quickTools.map((tool) => (
                        <QuickButton key={tool.label} $caret={tool.caret} disabled={tool.disabled} aria-label={tool.label}>
                            {tool.caret ? <Caret /> : <Icon name={tool.icon} />}
                        </QuickButton>
                    ))}
                </QuickAccess>
                <QuickButton aria-label="自定义快速访问工具栏">
                    <svg width="11" height="8" viewBox="0 0 11 8">
                        <path d="M0 .5h11M1 3h9L5.500 8z" fill="#40484a" stroke="#40484a" />
                    </svg>
                </QuickButton>
                <WindowTitle>GESHAN2DDY (活动的) - Creo Parametric</WindowTitle>
            </TitleBar>
            <TabBar>
                <FileTab>文件</FileTab>
                {tabs.map((tab) => (
                    <Tab key={tab} $active={tab === "分析"} $wide={tab.length > 4}>{tab}</Tab>
                ))}
            </TabBar>
            <RibbonGroups />
            <Workspace>
                <ModelTree />
                <Viewport>
                    <Mesh />
                    <ViewTools>
                        {viewTools.map(([icon, label, menu]) => (
                            <ViewTool key={icon} aria-label={label}>
                                <Icon name={icon} />
                                {menu && <Corner />}
                            </ViewTool>
                        ))}
                    </ViewTools>
                    <HealthPopup />
                </Viewport>
            </Workspace>
        </Page>
    );
};

export default App;
